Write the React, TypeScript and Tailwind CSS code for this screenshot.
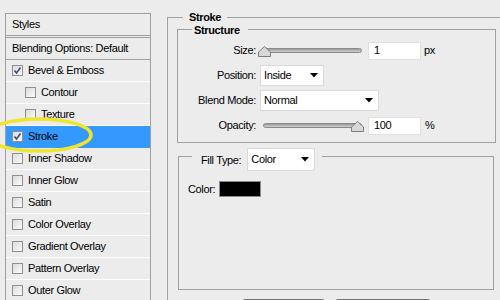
import React from "react";

const font = { fontFamily: '"Liberation Sans", Arial, sans-serif' };

type Item = { label: string; checked?: boolean; indent?: boolean; selected?: boolean };

const items: Item[] = [
  { label: "Bevel & Emboss", checked: true },
  { label: "Contour", indent: true },
  { label: "Texture", indent: true },
  { label: "Stroke", checked: true, selected: true },
  { label: "Inner Shadow" },
  { label: "Inner Glow" },
  { label: "Satin" },
  { label: "Color Overlay" },
  { label: "Gradient Overlay" },
  { label: "Pattern Overlay" },
  { label: "Outer Glow" },
];

function Checkbox({ checked }: { checked?: boolean }) {
  return (
    <span className="flex h-[11px] w-[11px] shrink-0 items-center justify-center border border-[#8f8f8f] bg-gradient-to-br from-[#dcdcdc] to-[#fafafa]">
      {checked && (
        <svg width="9" height="9" viewBox="0 0 9 9">
          <path d="M1.5 4.5 L3.5 7 L7.5 1.5" fill="none" stroke="#3a4a8a" strokeWidth="1.6" />
        </svg>
      )}
    </span>
  );
}

function Caret() {
  return (
    <svg width="8" height="5" viewBox="0 0 8 5" className="shrink-0">
      <path d="M0 0 H8 L4 4.5 Z" fill="#000" />
    </svg>
  );
}

function Select({ value, w }: { value: string; w: string }) {
  return (
    <div className={`flex h-[21px] items-center justify-between border border-[#d9d9d9] bg-white pl-[3px] pr-[5px] ${w}`}>
      <span>{value}</span>
      <Caret />
    </div>
  );
}

function Slider({ at }: { at: "start" | "end" }) {
  return (
    <div className="relative h-[12px] w-[106px]">
      <div className="absolute left-[5px] right-[2px] top-[3px] h-[5px] rounded-full border border-[#8a8a8a] bg-gradient-to-b from-[#9a9a9a] to-[#d0d0d0]" />
      <svg
        width="13"
        height="11"
        viewBox="0 0 13 11"
        className={`absolute top-[1px] ${at === "start" ? "left-0" : "left-[93px]"}`}
      >
        <path d="M6.5 0.5 L12.5 6 V10.5 H0.5 V6 Z" fill="#d8d8d8" stroke="#7d7d7d" />
      </svg>
    </div>
  );
}

function NumInput({ value }: { value: string }) {
  return (
    <div className="flex h-[18px] w-[53px] items-center border border-[#e0e0e0] bg-white pl-[5px]">{value}</div>
  );
}

export default function App() {
  return (
    <div
      className="relative h-[300px] w-[500px] overflow-hidden bg-[#ececec] text-[11px] tracking-[-0.35px] text-black"
      style={font}
    >
      <div className="flex">
        {/* Styles list */}
        <div className="ml-[5px] mt-[13px] w-[146px] shrink-0 border-l border-r border-t border-[#a0a0a0]">
          <div className="flex h-[22px] items-center border-b border-[#a0a0a0] pl-[6px]">Styles</div>
          <div className="mt-[1px] flex h-[23px] items-center border-b border-t border-[#a0a0a0] pl-[6px]">
            Blending Options: Default
          </div>
          {items.map((it) => (
            <div
              key={it.label}
              className={`flex h-[22px] items-center gap-[5px] border-b ${
                it.selected ? "border-[#3399ff] bg-[#3399ff]" : "border-white"
              } ${it.indent ? "pl-[19px]" : "pl-[6px]"}`}
            >
              <Checkbox checked={it.checked} />
              <span>{it.label}</span>
            </div>
          ))}
        </div>

        {/* Stroke options */}
        <fieldset className="ml-[16px] mt-[9px] w-[340px] shrink-0 border-l border-t border-[#a0a0a0] pl-[9px]">
          <legend className="ml-[6px] px-[6px] font-bold">Stroke</legend>

          <fieldset className="mt-[-4px] w-[319px] border border-[#a0a0a0]">
            <legend className="ml-[14px] pl-[2px] pr-[8px] font-bold">Structure</legend>
            <div className="flex flex-col pb-[4px]">
              <div className="flex h-[25px] items-center">
                <span className="w-[78px] text-right">Size:</span>
                <div className="ml-[2px]">
                  <Slider at="start" />
                </div>
                <div className="ml-[4px]">
                  <NumInput value="1" />
                </div>
                <span className="ml-[3px]">px</span>
              </div>
              <div className="flex h-[25px] items-center">
                <span className="w-[78px] text-right">Position:</span>
                <div className="ml-[4px]">
                  <Select value="Inside" w="w-[64px]" />
                </div>
              </div>
              <div className="flex h-[25px] items-center">
                <span className="w-[78px] text-right">Blend Mode:</span>
                <div className="ml-[4px]">
                  <Select value="Normal" w="w-[119px]" />
                </div>
              </div>
              <div className="flex h-[25px] items-center">
                <span className="w-[78px] text-right">Opacity:</span>
                <div className="ml-[2px]">
                  <Slider at="end" />
                </div>
                <div className="ml-[4px]">
                  <NumInput value="100" />
                </div>
                <span className="ml-[4px]">%</span>
              </div>
            </div>
          </fieldset>

          <fieldset className="ml-[1px] mt-[5px] h-[142px] w-[316px] border border-[#a0a0a0]">
            <legend className="ml-[13px] h-[16px] pl-[9px] pr-[7px]">
              <div className="flex items-start">
                <span className="mt-[4px]">Fill Type:</span>
                <div className="ml-[6px] bg-white">
                  <Select value="Color" w="w-[68px] h-[23px]" />
                </div>
              </div>
            </legend>
            <div className="mt-[17px] flex items-center pl-[9px]">
              <span>Color:</span>
              <span className="ml-[4px] h-[16px] w-[42px] border border-[#8a8a8a] bg-black" />
            </div>
          </fieldset>

          <div className="ml-[65px] mt-[9px] flex gap-[10px]">
            <div className="h-[22px] w-[83px] rounded-[3px] border border-[#707070] bg-[#f4f4f4]" />
            <div className="h-[22px] w-[96px] rounded-[3px] border border-[#707070] bg-[#f4f4f4]" />
          </div>
        </fieldset>
      </div>

      {/* yellow highlight ring */}
      <svg className="pointer-events-none absolute left-0 top-0" width="120" height="170" viewBox="0 0 120 170">
        <ellipse cx="39" cy="135" rx="52" ry="16" fill="none" stroke="#efe52a" strokeWidth="3.5" />
      </svg>
    </div>
  );
}
